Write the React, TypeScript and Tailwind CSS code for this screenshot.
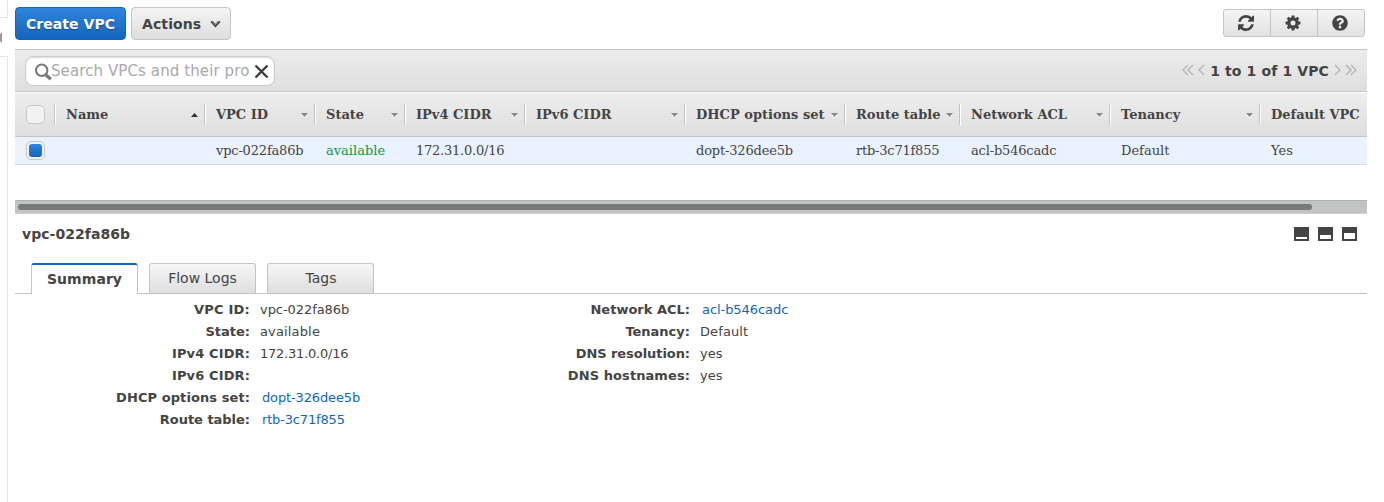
import React from 'react';
import { FaQuestionCircle } from 'react-icons/fa';

type Column = {
  label: string;
  value: string;
  width: string;
  sort: 'asc' | 'none' | 'hidden';
  tracking?: string;
};

const columns: Column[] = [
  { label: 'Name', value: '', width: 'w-[150px]', sort: 'asc' },
  { label: 'VPC ID', value: 'vpc-022fa86b', width: 'w-[110px]', sort: 'none', tracking: 'tracking-[-0.18px]' },
  { label: 'State', value: 'available', width: 'w-[90px]', sort: 'none' },
  { label: 'IPv4 CIDR', value: '172.31.0.0/16', width: 'w-[120px]', sort: 'none', tracking: 'tracking-[-0.23px]' },
  { label: 'IPv6 CIDR', value: '', width: 'w-[160px]', sort: 'none' },
  { label: 'DHCP options set', value: 'dopt-326dee5b', width: 'w-[160px]', sort: 'none', tracking: 'tracking-[-0.17px]' },
  { label: 'Route table', value: 'rtb-3c71f855', width: 'w-[115px]', sort: 'none', tracking: 'tracking-[-0.22px]' },
  { label: 'Network ACL', value: 'acl-b546cadc', width: 'w-[150px]', sort: 'none', tracking: 'tracking-[-0.17px]' },
  { label: 'Tenancy', value: 'Default', width: 'w-[150px]', sort: 'none' },
  { label: 'Default VPC', value: 'Yes', width: 'w-[108px]', sort: 'hidden' },
];

type Detail = { label: string; value: string; link?: boolean; labelTracking?: string; tracking?: string };

const leftDetails: Detail[] = [
  { label: 'VPC ID', value: 'vpc-022fa86b', labelTracking: 'tracking-[0.2px]', tracking: 'tracking-[-0.06px]' },
  { label: 'State', value: 'available', tracking: 'tracking-[0.15px]' },
  { label: 'IPv4 CIDR', value: '172.31.0.0/16', labelTracking: 'tracking-[0.12px]', tracking: 'tracking-[-0.23px]' },
  { label: 'IPv6 CIDR', value: '', labelTracking: 'tracking-[0.12px]' },
  { label: 'DHCP options set', value: 'dopt-326dee5b', link: true, labelTracking: 'tracking-[0.08px]', tracking: 'tracking-[-0.14px]' },
  { label: 'Route table', value: 'rtb-3c71f855', link: true, labelTracking: 'tracking-[-0.03px]', tracking: 'tracking-[-0.16px]' },
];

const rightDetails: Detail[] = [
  { label: 'Network ACL', value: 'acl-b546cadc', link: true, tracking: 'tracking-[-0.06px]' },
  { label: 'Tenancy', value: 'Default', tracking: 'tracking-[0.1px]' },
  { label: 'DNS resolution', value: 'yes', labelTracking: 'tracking-[-0.06px]' },
  { label: 'DNS hostnames', value: 'yes', labelTracking: 'tracking-[0.08px]' },
];

function SideRail() {
  return (
    <div className="flex h-full w-2 shrink-0 flex-col">
      <div className="h-[18px] border-r border-b border-[#e6e6e6]" />
      <div className="flex h-[38px] items-center">
        <svg width="3" height="12" viewBox="0 0 3 12" className="mt-px">
          <path d="M2 0v11L0 9V2z" fill="#999" />
        </svg>
      </div>
      <div className="grow border-t border-r border-[#e6e6e6]" />
    </div>
  );
}

function Chevrons({ dir, double }: { dir: 'left' | 'right'; double?: boolean }) {
  return (
    <svg
      width={double ? 12 : 7}
      height="12"
      viewBox={double ? '0 0 12 12' : '0 0 7 12'}
      className={dir === 'right' ? '-mt-[2px] rotate-180' : '-mt-[2px]'}
      fill="none"
      stroke="#b8b8b8"
      strokeWidth="1.5"
    >
      <path d="M6 1L1 6l5 5" />
      {double && <path d="M11 1L6 6l5 5" />}
    </svg>
  );
}

function Toolbar() {
  return (
    <div className="flex h-[49px] items-start pt-[7px]">
      <button className="h-[33px] w-[111px] rounded-[4px] border border-[#1166bb] bg-linear-to-b from-[#3184dc] to-[#1166bb] pt-[2px] text-[14px] font-bold tracking-[0.05px] text-white [text-shadow:0_1px_1px_#0005]">
        Create VPC
      </button>
      <button className="ml-[5px] flex h-[33px] w-[100px] items-center rounded-[4px] border border-[#c4c4c4] bg-linear-to-b from-[#f4f4f4] to-[#dedede] pl-[10px] text-[14px] font-bold tracking-[0.1px]">
        <span className="pt-[2px]">Actions</span>
        <svg width="11" height="8" viewBox="0 0 11 8" className="ml-[9px]">
          <path d="M1 1h2.500l2 2.500 2-2.500H10v1.200L5.500 6.800 1 2.200z" fill="#8c8c8c" />
          <path d="M1 1.500l4.500 5 4.500-5" fill="none" stroke="#3c3c3c" strokeWidth="1.200" />
        </svg>
      </button>
      <div className="mt-[2px] mr-[2px] ml-auto flex h-7 w-[142px] divide-x divide-[#c4c4c4] rounded-[3px] border border-[#c4c4c4] bg-linear-to-b from-[#f4f4f4] to-[#e2e2e2]">
        <button className="flex w-[47px] items-center justify-center pr-[2px]">
          <svg width="16" height="16" viewBox="0 0 1536 1536" fill="#444">
            <path d="M1511 928q0 5-1 7-64 268-268 434.500T764 1536q-146 0-282.500-55T238 1324l-129 129q-19 19-45 19t-45-19-19-45V960q0-26 19-45t45-19h448q26 0 45 19t19 45-19 45l-137 137q71 66 161 102t187 36q134 0 250-65t186-179q11-17 53-117 8-23 30-23h192q13 0 22.500 9.500t9.500 22.500zm25-800v448q0 26-19 45t-45 19h-448q-26 0-45-19t-19-45 19-45l138-138Q969 256 768 256q-134 0-250 65T332 500q-11 17-53 117-8 23-30 23H50q-13 0-22.500-9.500T18 608v-7q65-268 270-434.500T768 0q146 0 284 55.500T1297 212l130-129q19-19 45-19t45 19 19 45z" />
          </svg>
        </button>
        <button className="flex w-[47px] items-center justify-center pr-[3px]">
          <svg width="16" height="16" viewBox="0 0 16 16" fill="#444">
            <path
              fillRule="evenodd"
              d="M6.700 .5h2.600l.4 2 1 .45 1.750-1.150 1.750 1.750L13.050 5.300l.45 1 2 .4v2.600l-2 .4-.45 1 1.150 1.750-1.750 1.750-1.750-1.150-1 .45-.4 2H6.700l-.4-2-1-.45-1.750 1.150L1.800 12.450l1.150-1.750-.45-1-2-.4V6.700l2-.4.45-1L1.800 3.550 3.550 1.800 5.300 2.950l1-.45zM8 5.500a2.500 2.500 0 1 0 0 5 2.500 2.500 0 0 0 0-5z"
            />
          </svg>
        </button>
        <button className="flex w-[46px] items-center justify-center pr-[2px]">
          <FaQuestionCircle size={16} color="#444" />
        </button>
      </div>
    </div>
  );
}

function FilterBar() {
  return (
    <div className="flex h-[43px] items-center border-y border-[#c4c4c4] bg-linear-to-b from-[#ececec] to-[#dfdfdf] pr-[10px] pl-[10px]">
      <div className="flex h-[30px] w-[250px] items-center rounded-[8px] border border-[#ccc] bg-white pl-[8px] shadow-[inset_0_1px_2px_#0002]">
        <svg width="18" height="18" viewBox="0 0 18 18" fill="none" stroke="#777" className="mt-[2px] shrink-0">
          <circle cx="7.700" cy="7.300" r="5.700" strokeWidth="2" />
          <path d="M12 12l4.800 4.300" strokeWidth="3.200" />
        </svg>
        <span className="-ml-px w-[201px] pt-[2px] text-[15px] tracking-[0.1px] whitespace-nowrap text-[#a9a9a9]">
          Search VPCs and their pro
        </span>
        <svg width="15" height="15" viewBox="0 0 15 15" stroke="#3c3c3c" strokeWidth="2.400" className="mt-[2px] ml-[2px] shrink-0">
          <path d="M1.500 1.500l12 12M13.500 1.500l-12 12" />
        </svg>
      </div>
      <div className="ml-auto flex items-center text-[14px] font-bold">
        <Chevrons dir="left" double />
        <span className="w-[4px]" />
        <Chevrons dir="left" />
        <span className="mr-[5px] ml-[5px] pt-[2px] tracking-[0.12px] whitespace-nowrap">1 to 1 of 1 VPC</span>
        <Chevrons dir="right" />
        <span className="w-[4px]" />
        <Chevrons dir="right" double />
      </div>
    </div>
  );
}

function VpcTable() {
  return (
    <div className="font-['DejaVu_Serif',serif] text-[13px]">
      <div className="flex h-[45px] items-center border-t border-b border-t-white border-b-[#c4c4c4] bg-linear-to-b from-[#eeeeee] to-[#dedede] font-bold">
        <div className="w-[39px] pl-[11px]">
          <div className="size-[19px] rounded-[5px] border border-[#c8c8c8] bg-[#f1f1f1]" />
        </div>
        {columns.map((c) => (
          <div
            key={c.label}
            className={`${c.width} flex h-[21px] shrink-0 items-center border-l border-[#c4c4c4] pl-[11px] whitespace-nowrap shadow-[inset_1px_0_0_#fff]`}
          >
            {c.label}
            {c.sort === 'asc' && (
              <svg width="7" height="4" viewBox="0 0 7 4" className="mr-[6px] ml-auto">
                <path d="M0 4L3.500 0 7 4z" fill="#333" />
              </svg>
            )}
            {c.sort === 'none' && (
              <svg width="7" height="5" viewBox="0 0 7 5" className="mt-px mr-[6px] ml-auto">
                <path d="M0 1L3.500 5 7 1z" fill="#fff" />
                <path d="M0 0h7L3.500 4z" fill="#888" />
              </svg>
            )}
          </div>
        ))}
      </div>
      <div className="flex h-7 items-center border-b border-[#d8dadd] bg-[#eaf2ff]">
        <div className="w-[39px] pl-[11px]">
          <div className="flex size-[19px] items-center justify-center rounded-[5px] border border-[#c8c8c8] bg-[#f1f1f1]">
            <div className="size-[13px] rounded-[3px] bg-linear-to-b from-[#3184dc] to-[#1166bb]" />
          </div>
        </div>
        {columns.map((c) => (
          <div
            key={c.label}
            className={`${c.width} ${c.tracking ?? ''} shrink-0 pl-[12px] whitespace-nowrap ${c.label === 'State' ? 'text-[#0f9a43]' : ''}`}
          >
            {c.value}
          </div>
        ))}
      </div>
    </div>
  );
}

function PaneIcon({ fill }: { fill: string }) {
  return (
    <div className="flex h-[14px] w-[15px] flex-col justify-end bg-[#444] p-[2px]">
      <div className={`${fill} bg-white`} />
    </div>
  );
}

function Details({ rows }: { rows: Detail[] }) {
  return (
    <div className="flex w-[440px] flex-col">
      {rows.map((r) => (
        <div key={r.label} className="flex h-[22px] items-center">
          <div className={`w-[235px] text-right font-bold ${r.labelTracking ?? ''}`}>{r.label}:</div>
          <div className={`${r.link ? 'pl-[12px] text-[#1166bb]' : 'pl-[10px]'} ${r.tracking ?? ''}`}>{r.value}</div>
        </div>
      ))}
    </div>
  );
}

const idleTab =
  'flex h-[30px] w-[107px] items-center justify-center rounded-t-[3px] border border-b-0 border-[#c4c4c4] bg-linear-to-b from-[#f7f7f7] to-[#dedede]';

export default function App() {
  return (
    <div className="flex h-[502px] w-[1384px] overflow-hidden bg-white font-['DejaVu_Sans',sans-serif] text-[#444]">
      <SideRail />
      <main className="ml-[7px] w-[1352px]">
        <Toolbar />
        <FilterBar />
        <VpcTable />
        <div className="mt-[35px] h-[14px] border-t border-b border-t-[#aeb0af] border-b-[#cfcdcd] bg-[#c1c4c2] pt-[3px] pl-[3px]">
          <div className="h-[6px] w-[1294px] rounded-full bg-[#777b7b]" />
        </div>
        <div className="flex h-[39px] items-center justify-between pr-[10px] pl-[7px]">
          <h2 className="pt-[2px] text-[14px] font-bold tracking-[0.05px]">vpc-022fa86b</h2>
          <div className="flex gap-[9px]">
            <PaneIcon fill="h-[2px]" />
            <PaneIcon fill="h-[4px]" />
            <PaneIcon fill="h-[6px]" />
          </div>
        </div>
        <div className="mt-[10px] flex h-[31px] gap-[11px] border-b border-[#c4c4c4] pl-[16px] text-[14px]">
          <div className="flex h-[31px] w-[107px] items-center justify-center rounded-t-[3px] border-x border-t-2 border-x-[#c4c4c4] border-t-[#1166bb] bg-white font-bold tracking-[0.05px]">
            Summary
          </div>
          <div className={idleTab}>Flow Logs</div>
          <div className={idleTab}>
            <span className="pl-px">Tags</span>
          </div>
        </div>
        <div className="flex pt-[5px] text-[13px]">
          <Details rows={leftDetails} />
          <Details rows={rightDetails} />
        </div>
      </main>
    </div>
  );
}
